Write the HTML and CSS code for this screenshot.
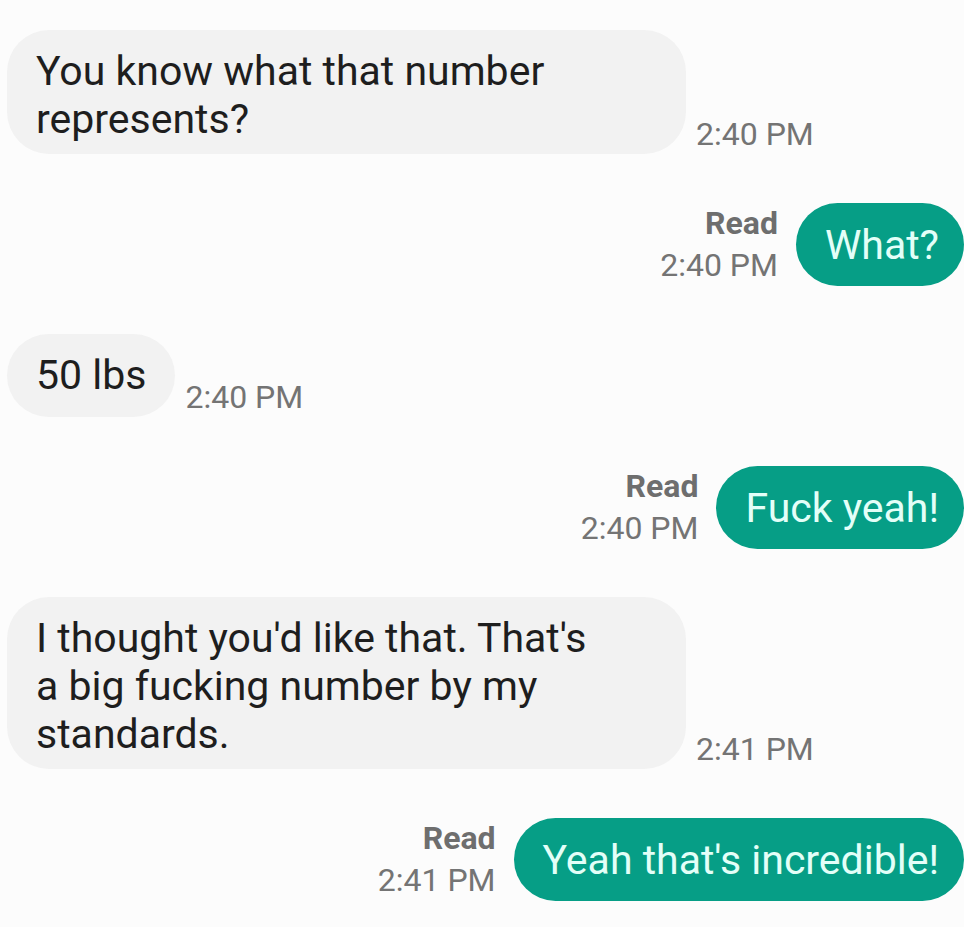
FILE: index.html
```html
<!DOCTYPE html>
<html lang="en">
<head>
  <meta charset="UTF-8">
  <meta name="viewport" content="width=device-width, initial-scale=1.0">
  <title>Messages</title>
  <link rel="stylesheet" href="styles.css">
</head>
<body>
  <div class="thread">
    <div class="row in">
      <div class="bubble wide"><p>You know what that number represents?</p></div>
      <span class="time">2:40 PM</span>
    </div>

    <div class="row out">
      <div class="meta">
        <span class="read">Read</span>
        <span class="time">2:40 PM</span>
      </div>
      <div class="bubble"><p>What?</p></div>
    </div>

    <div class="row in">
      <div class="bubble"><p>50 lbs</p></div>
      <span class="time">2:40 PM</span>
    </div>

    <div class="row out">
      <div class="meta">
        <span class="read">Read</span>
        <span class="time">2:40 PM</span>
      </div>
      <div class="bubble"><p>Fuck yeah!</p></div>
    </div>

    <div class="row in">
      <div class="bubble wide"><p>I thought you'd like that. That's a big fucking number by my standards.</p></div>
      <span class="time">2:41 PM</span>
    </div>

    <div class="row out">
      <div class="meta">
        <span class="read">Read</span>
        <span class="time">2:41 PM</span>
      </div>
      <div class="bubble"><p>Yeah that's incredible!</p></div>
    </div>
  </div>
</body>
</html>
```

FILE: styles.css
```css
body {
  margin: 0;
  padding: 0;
  background-color: #fcfcfc;
  font-family: Roboto, "Noto Sans", Arial, sans-serif;
  overflow: hidden;
}

.thread {
  display: flex;
  flex-direction: column;
  gap: 48px;
  padding: 30px 0 0 7px;
}

.row {
  display: flex;
  align-items: flex-end;
}

.row.out {
  justify-content: flex-end;
  align-items: center;
}

.bubble {
  box-sizing: border-box;
  min-height: 83px;
  padding: 17px 29px 11px 29px;
  border-radius: 42px;
  font-size: 41px;
  line-height: 48px;
}

.bubble p {
  margin: 0;
}

.in .bubble {
  background-color: #f2f2f2;
  color: #1e1e1e;
}

.in .bubble.wide {
  width: 679px;
}

.in .bubble.wide p {
  max-width: 570px;
}

.in .time {
  margin: 0 0 1px 10px;
}

.out .bubble {
  padding-top: 18px;
  background-color: #069e86;
  color: #e3fff8;
  padding-right: 25px;
}

.meta {
  display: flex;
  flex-direction: column;
  align-items: flex-end;
  margin-right: 18px;
  line-height: 42px;
}

.time {
  font-size: 32px;
  color: #747474;
}

.read {
  font-size: 32px;
  font-weight: bold;
  color: #6e6e6e;
}
```
